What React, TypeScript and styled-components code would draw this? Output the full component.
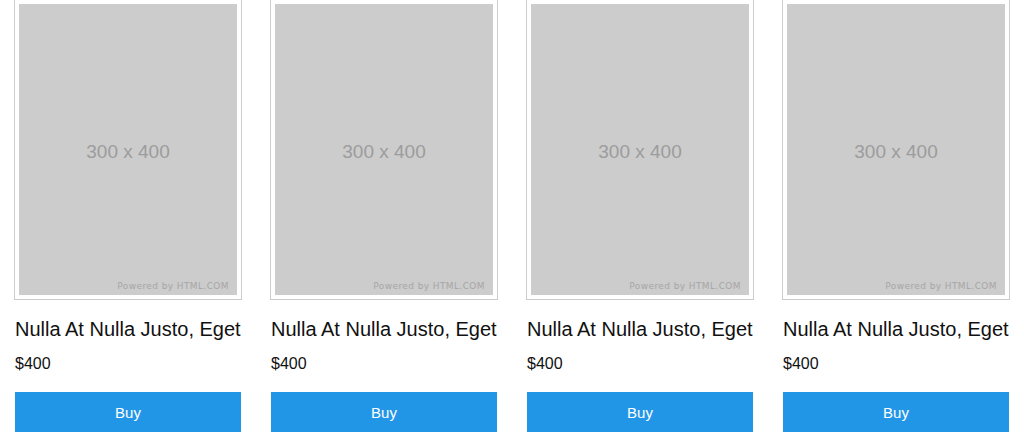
import React from "react";
import styled, { createGlobalStyle } from "styled-components";

const GlobalStyle = createGlobalStyle`
  html, body {
    margin: 0;
    padding: 0;
    background: #fff;
    font-family: "Liberation Sans", Arial, sans-serif;
  }
`;

const ProductGrid = styled.div`
  display: grid;
  grid-template-columns: repeat(4, 256px);
  margin-top: -1px;
`;

const ProductTile = styled.div`
  display: flex;
  flex-direction: column;
  padding: 0 15px;
`;

const ImageFrame = styled.div`
  margin: 0 -1px;
  border: 1px solid #cccccc;
  padding: 4px;
`;

const Placeholder = styled.div`
  position: relative;
  box-sizing: border-box;
  height: 291px;
  padding-top: 4px;
  background: #cccccc;
  display: flex;
  align-items: center;
  justify-content: center;
  color: #9c9c9c;
  font-size: 19px;
  font-family: "Liberation Sans", Arial, sans-serif;
`;

const PoweredBy = styled.span`
  position: absolute;
  right: 8px;
  bottom: 4px;
  font-family: "DejaVu Sans", sans-serif;
  font-size: 9px;
  letter-spacing: 0.4px;
  color: #a6a6a6;
`;

const ProductName = styled.h2`
  margin: 17px 0 0;
  font-size: 20px;
  line-height: 24px;
  font-weight: 400;
  color: #111111;
  white-space: nowrap;
`;

const Price = styled.p`
  margin: 13px 0 0;
  font-size: 16px;
  line-height: 20px;
  color: #111111;
`;

const BuyButton = styled.button`
  margin-top: 18px;
  height: 40px;
  border: none;
  background: #2196e6;
  color: #ffffff;
  font-family: "Liberation Sans", Arial, sans-serif;
  font-size: 15px;
  cursor: pointer;
`;

const products = [1, 2, 3, 4].map((id) => ({
  id,
  name: "Nulla At Nulla Justo, Eget",
  price: "$400",
}));

function App() {
  return (
    <>
      <GlobalStyle />
      <ProductGrid>
        {products.map((product) => {
          return (
            <ProductTile key={product.id}>
              <ImageFrame>
                <Placeholder>
                  300 x 400
                  <PoweredBy>Powered by HTML.COM</PoweredBy>
                </Placeholder>
              </ImageFrame>
              <ProductName>{product.name}</ProductName>
              <Price>{product.price}</Price>
              <BuyButton>Buy</BuyButton>
            </ProductTile>
          );
        })}
      </ProductGrid>
    </>
  );
}

export default App;
